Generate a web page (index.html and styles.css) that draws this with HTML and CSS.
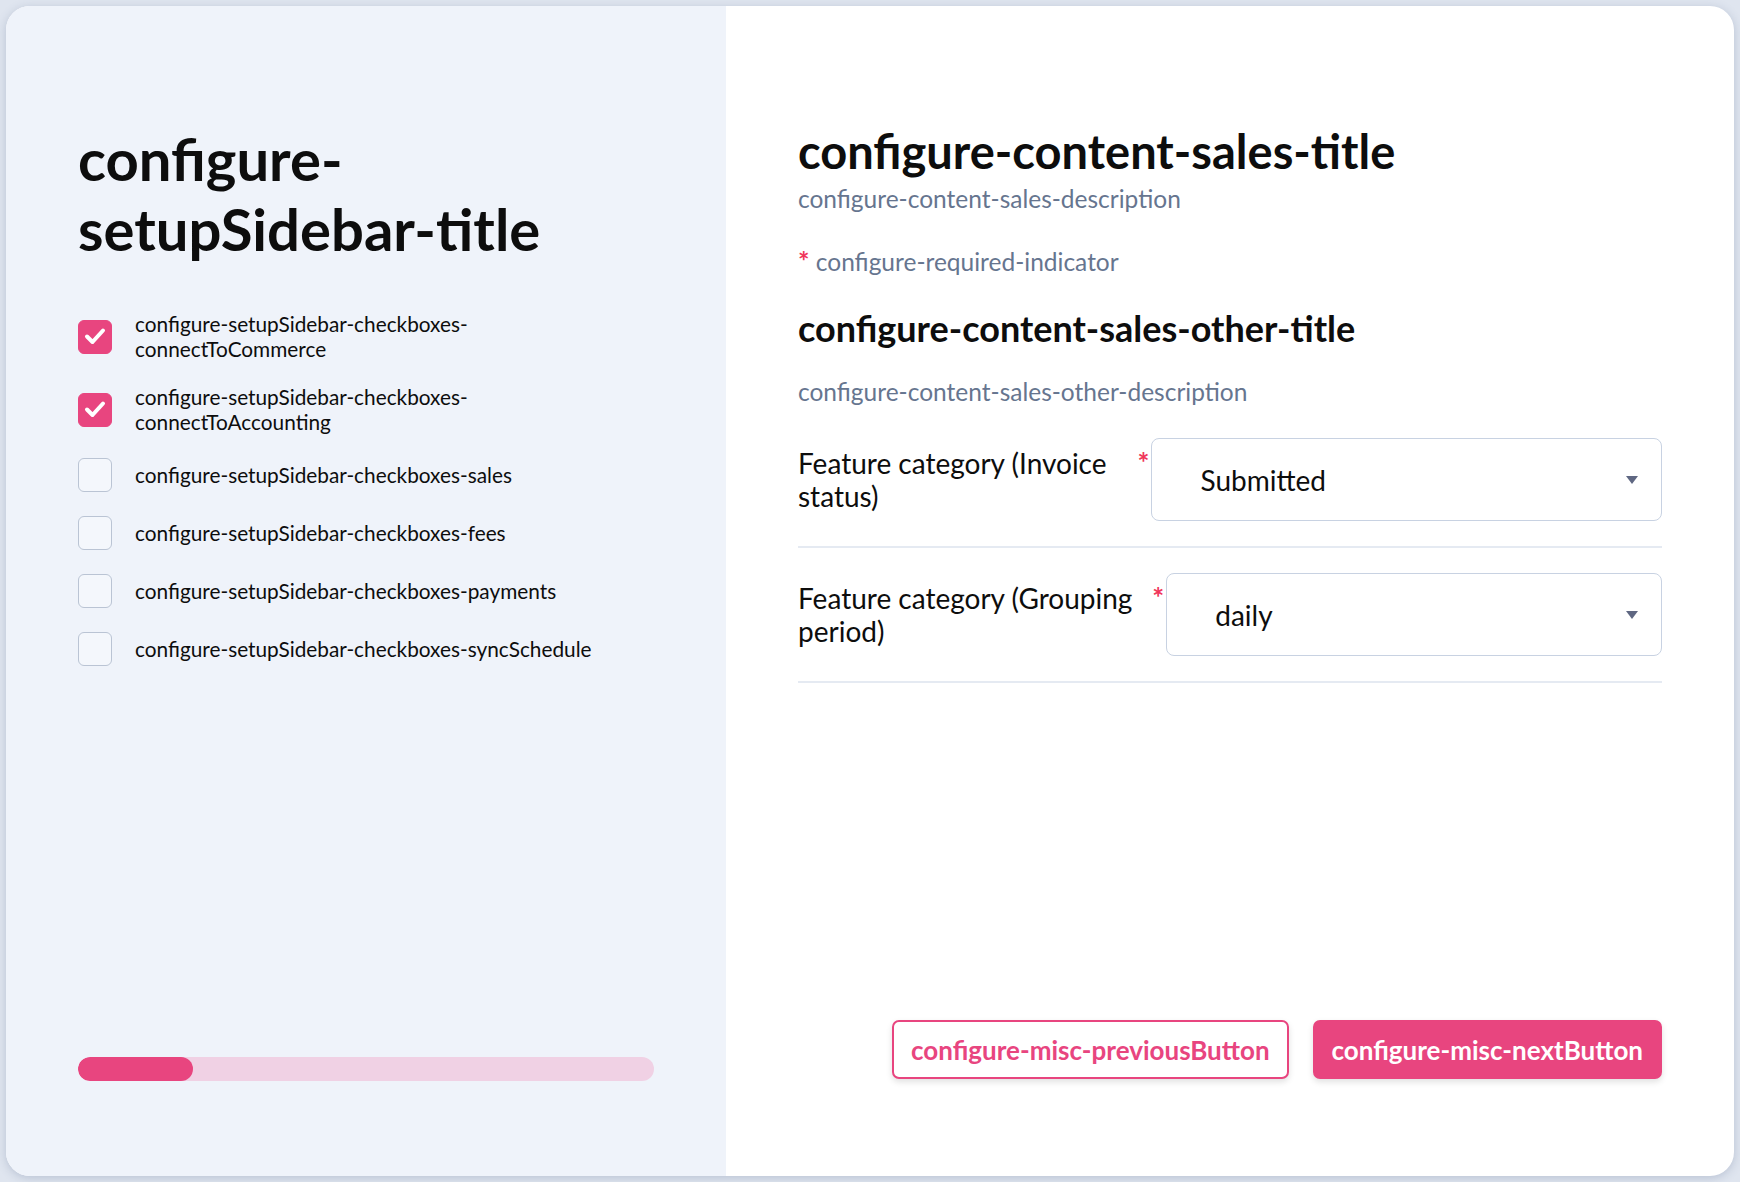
FILE: index.html
```html
<!DOCTYPE html>
<html lang="en">
<head>
    <meta charset="UTF-8">
    <meta name="viewport" content="width=device-width, initial-scale=1.0">
    <title>Configure</title>
    <link rel="stylesheet" href="styles.css">
</head>
<body>
    <div class="card">
        <aside class="sidebar">
            <h1 class="sidebar-title">configure-<br>setupSidebar-title</h1>
            <ul class="steps">
                <li class="step">
                    <span class="box checked">
                        <svg viewBox="0 0 34 34" width="34" height="34"><path d="M9 17.5l5.5 5.5L25 11.5" fill="none" stroke="#fff" stroke-width="4" stroke-linecap="round" stroke-linejoin="round"/></svg>
                    </span>
                    <span class="step-label">configure-setupSidebar-checkboxes-<br>connectToCommerce</span>
                </li>
                <li class="step">
                    <span class="box checked">
                        <svg viewBox="0 0 34 34" width="34" height="34"><path d="M9 17.5l5.5 5.5L25 11.5" fill="none" stroke="#fff" stroke-width="4" stroke-linecap="round" stroke-linejoin="round"/></svg>
                    </span>
                    <span class="step-label">configure-setupSidebar-checkboxes-<br>connectToAccounting</span>
                </li>
                <li class="step">
                    <span class="box"></span>
                    <span class="step-label">configure-setupSidebar-checkboxes-sales</span>
                </li>
                <li class="step">
                    <span class="box"></span>
                    <span class="step-label">configure-setupSidebar-checkboxes-fees</span>
                </li>
                <li class="step">
                    <span class="box"></span>
                    <span class="step-label">configure-setupSidebar-checkboxes-payments</span>
                </li>
                <li class="step">
                    <span class="box"></span>
                    <span class="step-label">configure-setupSidebar-checkboxes-syncSchedule</span>
                </li>
            </ul>
            <div class="progress">
                <div class="progress-fill" style="width: 20%;"></div>
            </div>
        </aside>

        <main class="content">
            <h2 class="content-title">configure-content-sales-title</h2>
            <p class="muted">configure-content-sales-description</p>
            <p class="muted required-note"><span class="req">*</span> configure-required-indicator</p>

            <h3 class="section-title">configure-content-sales-other-title</h3>
            <p class="muted section-desc">configure-content-sales-other-description</p>

            <div class="field">
                <label class="field-label">Feature category (Invoice status)</label>
                <span class="req field-req">*</span>
                <div class="select">
                    <span>Submitted</span>
                    <svg class="caret" viewBox="0 0 12 8" width="12" height="8"><path d="M0 0h12L6 8z" fill="#5f6782"/></svg>
                </div>
            </div>
            <div class="field">
                <label class="field-label">Feature category (Grouping period)</label>
                <span class="req field-req">*</span>
                <div class="select">
                    <span>daily</span>
                    <svg class="caret" viewBox="0 0 12 8" width="12" height="8"><path d="M0 0h12L6 8z" fill="#5f6782"/></svg>
                </div>
            </div>

            <div class="actions">
                <button class="btn btn-outline">configure-misc-previousButton</button>
                <button class="btn btn-primary">configure-misc-nextButton</button>
            </div>
        </main>
    </div>
</body>
</html>
```

FILE: styles.css
```css
* {
    box-sizing: border-box;
}
body {
    margin: 0;
    padding: 6px;
    height: 100vh;
    background: #dfe5ef;
    font-family: Lato, "Liberation Sans", sans-serif;
    color: #0d0d0d;
}
.card {
    display: flex;
    height: 100%;
    border-radius: 24px;
    overflow: hidden;
    background: #fff;
    box-shadow: 0 2px 10px rgba(70, 90, 130, 0.25);
}

/* sidebar */
.sidebar {
    width: 720px;
    flex-shrink: 0;
    display: flex;
    flex-direction: column;
    padding: 116px 72px 95px;
    background: #eff3fa;
}
.sidebar-title {
    margin: 2px 0 0;
    font-size: 58px;
    line-height: 70px;
    font-weight: 700;
}
.steps {
    list-style: none;
    margin: 48px 0 0;
    padding: 0;
    display: flex;
    flex-direction: column;
    gap: 24px;
}
.step {
    display: flex;
    align-items: center;
    gap: 23px;
}
.box {
    width: 34px;
    height: 34px;
    flex-shrink: 0;
    border: 1.5px solid #bac4d4;
    border-radius: 6px;
    background: #f4f7fc;
}
.box.checked {
    background: #e8457f;
    border-color: #e8457f;
}
.box svg {
    display: block;
    margin: -1.5px;
}
.step-label {
    font-size: 20.8px;
    line-height: 24.5px;
}
.progress {
    margin-top: auto;
    height: 24px;
    border-radius: 12px;
    background: #f0d1e4;
    overflow: hidden;
}
.progress-fill {
    height: 100%;
    border-radius: 12px;
    background: #e8457f;
}

/* main content */
.content {
    flex: 1;
    display: flex;
    flex-direction: column;
    padding: 116px 72px 97px;
}
.content-title {
    margin: 0;
    font-size: 47px;
    line-height: 58px;
    font-weight: 700;
}
.muted {
    margin: 0;
    font-size: 24.5px;
    line-height: 30px;
    color: #66758f;
}
.content-title + .muted {
    margin-top: 4px;
}
.req {
    color: #f0365b;
    font-weight: 700;
}
.required-note .req {
    font-size: 27px;
}
.required-note {
    margin-top: 32px;
}
.section-title {
    margin: 29px 0 0;
    font-size: 36px;
    line-height: 44px;
    font-weight: 700;
}
.section-desc {
    margin-top: 27px;
    margin-bottom: 6px;
}
.field {
    display: flex;
    align-items: center;
    padding: 25px 0;
    border-bottom: 2px solid #e5eaf2;
}
.field-label {
    flex: 0 1 auto;
    font-size: 28px;
    line-height: 33px;
}
.field-req {
    align-self: flex-start;
    margin: 10px 2px 0 1px;
    font-size: 28px;
    line-height: 1;
}
.select {
    flex: 0 1 585px;
    height: 83px;
    display: flex;
    align-items: center;
    justify-content: space-between;
    padding: 0 23px 0 48px;
    border: 1.5px solid #c8d2e2;
    border-radius: 8px;
    font-size: 28px;
}
.actions {
    margin-top: auto;
    display: flex;
    justify-content: flex-end;
    gap: 24px;
}
.btn {
    height: 59px;
    padding: 0 17px;
    border: 2.5px solid #e8457f;
    border-radius: 7px;
    font-family: inherit;
    font-size: 26px;
    font-weight: 700;
    cursor: pointer;
    box-shadow: 0 3px 6px rgba(0, 0, 0, 0.12);
}
.btn-outline {
    background: #fff;
    color: #e8457f;
}
.btn-primary {
    background: #e8457f;
    color: #fff;
}
```
